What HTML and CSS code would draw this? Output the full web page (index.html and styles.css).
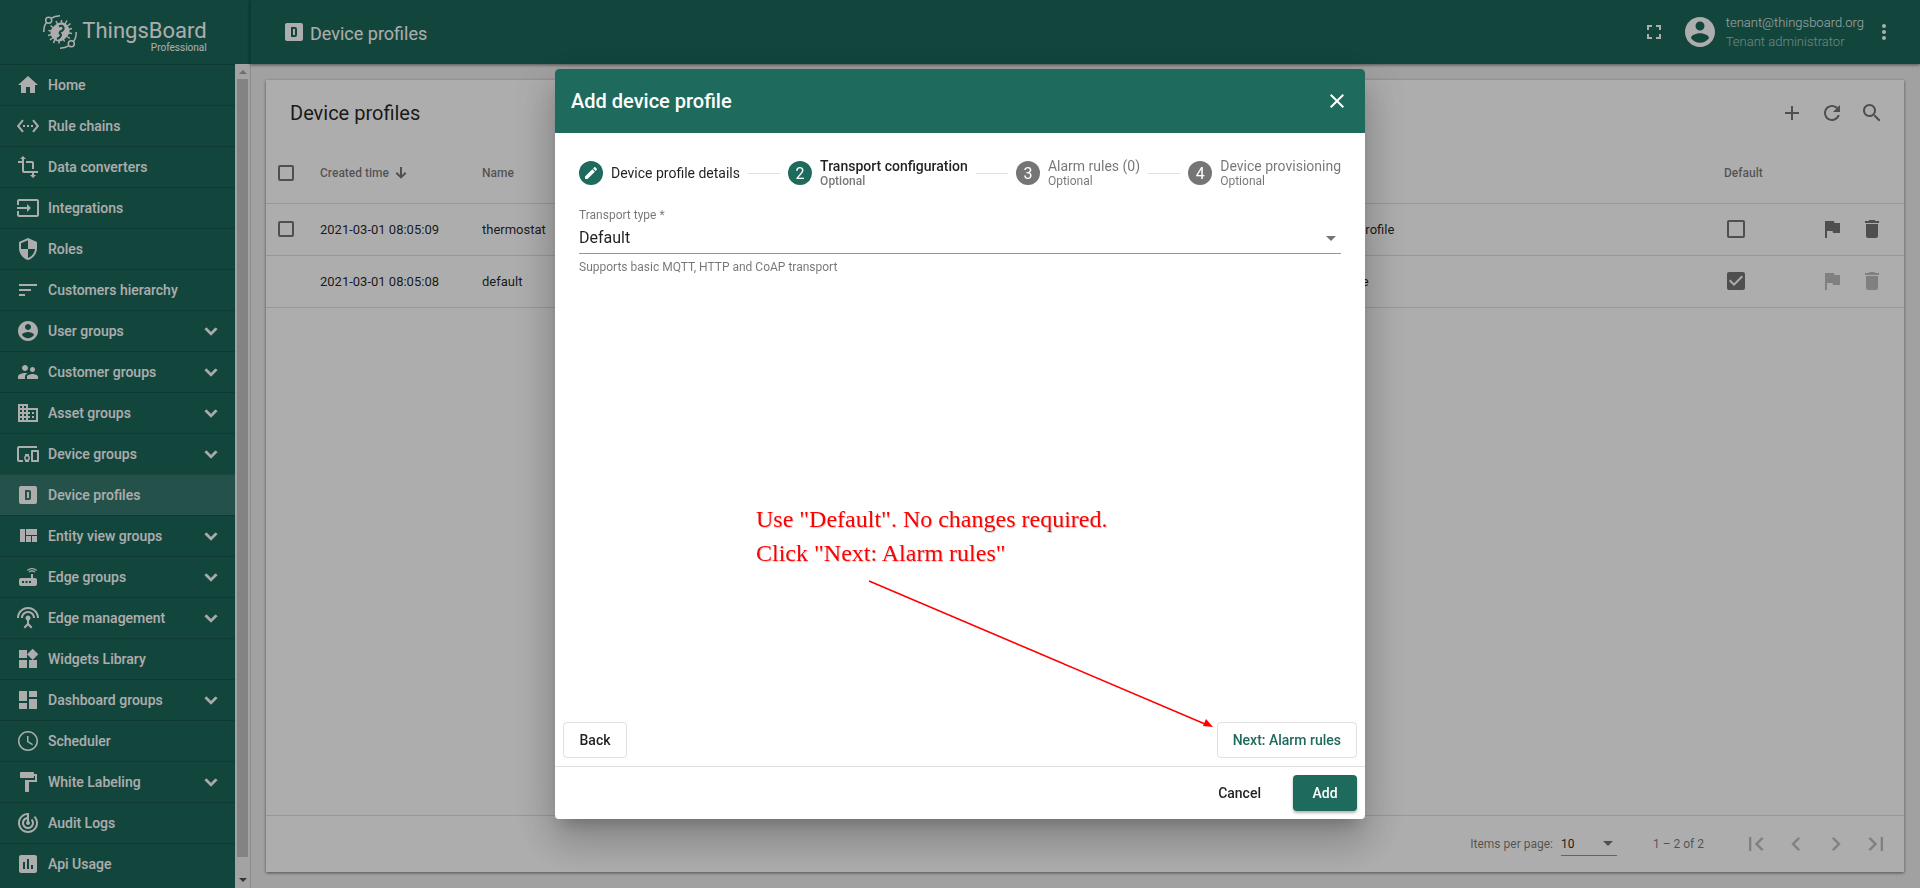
FILE: index.html
```
<!DOCTYPE html>
<html lang="en">
<head>
<meta charset="utf-8">
<title>Device profiles</title>
<link rel="stylesheet" href="styles.css">
</head>
<body>
<svg class="defs" aria-hidden="true">
  <symbol id="home" viewBox="0 0 24 24"><path d="M10 20v-6h4v6h5v-8h3L12 3 2 12h3v8z"/></symbol>
  <symbol id="chains" viewBox="0 0 24 24"><path d="M7.77 6.76L6.23 5.48.82 12l5.41 6.52 1.54-1.28L3.42 12l4.35-5.24zM7 13h2v-2H7v2zm10-2h-2v2h2v-2zm-6 2h2v-2h-2v2zm6.77-7.52l-1.54 1.28L20.58 12l-4.35 5.24 1.54 1.28L23.18 12l-5.41-6.52z"/></symbol>
  <symbol id="transform" viewBox="0 0 24 24"><path d="M22 18v-2H8V4h2L7 1 4 4h2v2H2v2h4v8c0 1.1.9 2 2 2h8v2h-2l3 3 3-3h-2v-2h4zM10 8h6v6h2V8c0-1.1-.9-2-2-2h-6v2z"/></symbol>
  <symbol id="input" viewBox="0 0 24 24"><path d="M21 3.01H3c-1.1 0-2 .9-2 2V9h2V4.99h18v14.03H3V15H1v4.01c0 1.1.9 1.98 2 1.98h18c1.1 0 2-.88 2-1.98v-14c0-1.11-.9-2-2-2zM11 16l4-4-4-4v3H1v2h10v3z"/></symbol>
  <symbol id="shield" viewBox="0 0 24 24"><path d="M12 1L3 5v6c0 5.55 3.84 10.74 9 12 5.16-1.26 9-6.45 9-12V5l-9-4zm0 10.99h7c-.53 4.12-3.28 7.79-7 8.94V12H5V6.3l7-3.11v8.8z"/></symbol>
  <symbol id="sort" viewBox="0 0 24 24"><path d="M3 18h6v-2H3v2zM3 6v2h18V6H3zm0 7h12v-2H3v2z"/></symbol>
  <symbol id="account" viewBox="0 0 24 24"><path d="M12 2C6.48 2 2 6.48 2 12s4.48 10 10 10 10-4.48 10-10S17.52 2 12 2zm0 3c1.66 0 3 1.34 3 3s-1.34 3-3 3-3-1.34-3-3 1.34-3 3-3zm0 14.2c-2.5 0-4.71-1.28-6-3.22.03-1.99 4-3.08 6-3.08 1.99 0 5.97 1.09 6 3.08-1.29 1.94-3.5 3.22-6 3.22z"/></symbol>
  <symbol id="people" viewBox="0 0 24 24"><path d="M16.5 12c1.38 0 2.49-1.12 2.49-2.5S17.88 7 16.5 7 14 8.12 14 9.5s1.12 2.5 2.5 2.5zM9 11c1.66 0 2.99-1.34 2.99-3S10.66 5 9 5 6 6.34 6 8s1.34 3 3 3zm7.5 3c-1.83 0-5.5.92-5.5 2.75V19h11v-2.25c0-1.83-3.67-2.75-5.5-2.75zM9 13c-2.33 0-7 1.17-7 3.5V19h7v-2.25c0-.85.33-2.34 2.37-3.47C10.5 13.1 9.66 13 9 13z"/></symbol>
  <symbol id="domain" viewBox="0 0 24 24"><path d="M12 7V3H2v18h20V7H12zM6 19H4v-2h2v2zm0-4H4v-2h2v2zm0-4H4V9h2v2zm0-4H4V5h2v2zm4 12H8v-2h2v2zm0-4H8v-2h2v2zm0-4H8V9h2v2zm0-4H8V5h2v2zm10 12h-8v-2h2v-2h-2v-2h2v-2h-2V9h8v10zm-2-8h-2v2h2v-2zm0 4h-2v2h2v-2z"/></symbol>
  <symbol id="devices" viewBox="0 0 24 24"><path d="M3 6h18V4H3c-1.1 0-2 .9-2 2v12c0 1.1.9 2 2 2h4v-2H3V6zm10 6H9v1.78c-.61.55-1 1.33-1 2.22s.39 1.67 1 2.22V20h4v-1.78c.61-.55 1-1.34 1-2.22s-.39-1.67-1-2.22V12zm-2 5.5c-.83 0-1.5-.67-1.5-1.5s.67-1.5 1.5-1.5 1.5.67 1.5 1.5-.67 1.5-1.5 1.5zM22 8h-6c-.5 0-1 .5-1 1v10c0 .5.5 1 1 1h6c.5 0 1-.5 1-1V9c0-.5-.5-1-1-1zm-1 10h-4v-8h4v8z"/></symbol>
  <symbol id="dbox" viewBox="0 0 24 24"><path d="M9 7h4a2 2 0 0 1 2 2v6a2 2 0 0 1-2 2H9V7m2 2v6h2V9h-2M5 3h14a2 2 0 0 1 2 2v14a2 2 0 0 1-2 2H5a2 2 0 0 1-2-2V5a2 2 0 0 1 2-2z" fill-rule="evenodd"/></symbol>
  <symbol id="quilt" viewBox="0 0 24 24"><path d="M10 18h5v-6h-5v6zm-6 0h5V5H4v13zm12 0h5v-6h-5v6zM10 5v6h11V5H10z"/></symbol>
  <symbol id="router" viewBox="0 0 24 24"><path d="M20.2 5.9l.8-.8C19.6 3.7 17.8 3 16 3s-3.600.7-5 2.100l.8.8C13 4.800 14.500 4.200 16 4.200s3 .6 4.200 1.700zm-.9.800c-.9-.9-2.100-1.400-3.300-1.400s-2.400.5-3.300 1.400l.8.8c.7-.7 1.600-1 2.500-1s1.800.3 2.500 1l.8-.8zM19 13h-2V9h-2v4H5c-1.100 0-2 .9-2 2v4c0 1.100.9 2 2 2h14c1.100 0 2-.9 2-2v-4c0-1.100-.9-2-2-2zM8 18H6v-2h2v2zm3.500 0h-2v-2h2v2zm3.500 0h-2v-2h2v2z"/></symbol>
  <symbol id="antenna" viewBox="0 0 24 24"><path d="M12 5c-3.870 0-7 3.130-7 7h2c0-2.760 2.240-5 5-5s5 2.240 5 5h2c0-3.870-3.130-7-7-7zm1 9.290c.88-.39 1.500-1.260 1.500-2.290 0-1.380-1.120-2.500-2.500-2.500S9.500 10.620 9.500 12c0 1.020.62 1.900 1.500 2.290v3.300L7.590 21 9 22.410l3-3 3 3L16.410 21 13 17.590v-3.300zM12 1C5.930 1 1 5.930 1 12h2c0-4.970 4.030-9 9-9s9 4.030 9 9h2c0-6.070-4.930-11-11-11z"/></symbol>
  <symbol id="widgets" viewBox="0 0 24 24"><path d="M13 13v8h8v-8h-8zM3 21h8v-8H3v8zM3 3v8h8V3H3zm13.660-1.310L11 7.340 16.660 13l5.660-5.660-5.660-5.650z"/></symbol>
  <symbol id="dashboard" viewBox="0 0 24 24"><path d="M3 13h8V3H3v10zm0 8h8v-6H3v6zm10 0h8V11h-8v10zm0-18v6h8V3h-8z"/></symbol>
  <symbol id="clock" viewBox="0 0 24 24"><path d="M11.990 2C6.470 2 2 6.480 2 12s4.470 10 9.990 10C17.520 22 22 17.520 22 12S17.520 2 11.990 2zM12 20.500a8.500 8.500 0 1 1 0-17 8.500 8.500 0 0 1 0 17zM12.500 7H11v6l5.250 3.150.75-1.230-4.500-2.670z"/></symbol>
  <symbol id="paint" viewBox="0 0 24 24"><path d="M18 4V3c0-.55-.45-1-1-1H5c-.55 0-1 .45-1 1v4c0 .55.45 1 1 1h12c.55 0 1-.45 1-1V6h1v4H9v11c0 .55.45 1 1 1h2c.55 0 1-.45 1-1v-9h8V4h-3z"/></symbol>
  <symbol id="track" viewBox="0 0 24 24"><path d="M19.070 4.930l-1.410 1.410C19.100 7.790 20 9.790 20 12c0 4.420-3.580 8-8 8s-8-3.580-8-8c0-4.080 3.050-7.440 7-7.930v2.020C8.160 6.570 6 9.030 6 12c0 3.310 2.690 6 6 6s6-2.690 6-6c0-1.660-.67-3.160-1.760-4.240l-1.410 1.410C15.550 9.900 16 10.900 16 12c0 2.210-1.790 4-4 4s-4-1.790-4-4c0-1.860 1.280-3.410 3-3.860v2.140c-.6.350-1 .98-1 1.720 0 1.100.9 2 2 2s2-.9 2-2c0-.74-.4-1.380-1-1.720V2h-1C6.480 2 2 6.480 2 12s4.480 10 10 10 10-4.480 10-10c0-2.760-1.120-5.260-2.930-7.070z"/></symbol>
  <symbol id="chart" viewBox="0 0 24 24"><path d="M19 3H5c-1.100 0-2 .9-2 2v14c0 1.100.9 2 2 2h14c1.100 0 2-.9 2-2V5c0-1.100-.9-2-2-2zM9 17H7v-7h2v7zm4 0h-2V7h2v10zm4 0h-2v-4h2v4z"/></symbol>
  <symbol id="chevron" viewBox="0 0 24 24"><path d="M7.410 8.840L12 13.420l4.590-4.580L18 10.250l-6 6-6-6z" stroke="currentColor" stroke-width="1"/></symbol>
  <symbol id="fullscreen" viewBox="0 0 24 24"><path d="M7 14H5v5h5v-2H7v-3zm-2-4h2V7h3V5H5v5zm12 7h-3v2h5v-5h-2v3zM14 5v2h3v3h2V5h-5z"/></symbol>
  <symbol id="more" viewBox="0 0 24 24"><path d="M12 8c1.100 0 2-.9 2-2s-.9-2-2-2-2 .9-2 2 .9 2 2 2zm0 2c-1.100 0-2 .9-2 2s.9 2 2 2 2-.9 2-2-.9-2-2-2zm0 6c-1.100 0-2 .9-2 2s.9 2 2 2 2-.9 2-2-.9-2-2-2z"/></symbol>
  <symbol id="add" viewBox="0 0 24 24"><path d="M19 13h-6v6h-2v-6H5v-2h6V5h2v6h6v2z"/></symbol>
  <symbol id="refresh" viewBox="0 0 24 24"><path d="M17.650 6.350C16.200 4.900 14.210 4 12 4c-4.420 0-7.990 3.580-7.990 8s3.570 8 7.990 8c3.730 0 6.840-2.550 7.730-6h-2.080c-.82 2.330-3.040 4-5.650 4-3.310 0-6-2.690-6-6s2.690-6 6-6c1.660 0 3.140.69 4.220 1.780L13 11h7V4l-2.350 2.350z"/></symbol>
  <symbol id="search" viewBox="0 0 24 24"><path d="M15.500 14h-.79l-.28-.27C15.410 12.590 16 11.110 16 9.500 16 5.910 13.090 3 9.500 3S3 5.910 3 9.500 5.910 16 9.500 16c1.610 0 3.090-.59 4.230-1.570l.27.28v.79l5 4.990L20.490 19l-4.990-5zm-6 0C7.010 14 5 11.990 5 9.500S7.010 5 9.500 5 14 7.010 14 9.500 11.990 14 9.500 14z"/></symbol>
  <symbol id="flag" viewBox="0 0 24 24"><path d="M14.400 6L14 4H5v17h2v-7h5.600l.4 2h7V6z"/></symbol>
  <symbol id="trash" viewBox="0 0 24 24"><path d="M6 19c0 1.100.9 2 2 2h8c1.100 0 2-.9 2-2V7H6v12zM19 4h-3.500l-1-1h-5l-1 1H5v2h14V4z"/></symbol>
  <symbol id="box" viewBox="0 0 24 24"><path d="M19 5v14H5V5h14m0-2H5c-1.100 0-2 .9-2 2v14c0 1.100.9 2 2 2h14c1.100 0 2-.9 2-2V5c0-1.100-.9-2-2-2z"/></symbol>
  <symbol id="boxon" viewBox="0 0 24 24"><path d="M19 3H5c-1.110 0-2 .9-2 2v14c0 1.100.89 2 2 2h14c1.110 0 2-.9 2-2V5c0-1.100-.89-2-2-2zm-9 14l-5-5 1.410-1.410L10 14.170l7.590-7.590L19 8l-9 9z"/></symbol>
  <symbol id="close" viewBox="0 0 24 24"><path d="M19 6.410L17.590 5 12 10.590 6.410 5 5 6.410 10.590 12 5 17.590 6.410 19 12 13.410 17.590 19 19 17.590 13.410 12z"/></symbol>
  <symbol id="pencil" viewBox="0 0 24 24"><path d="M3 17.250V21h3.750L17.810 9.940l-3.750-3.750L3 17.250zM20.710 7.040c.39-.39.39-1.020 0-1.410l-2.340-2.340c-.39-.39-1.020-.39-1.410 0l-1.830 1.830 3.750 3.750 1.830-1.830z"/></symbol>
  <symbol id="first" viewBox="0 0 24 24"><path d="M18.410 16.590L13.820 12l4.590-4.590L17 6l-6 6 6 6zM6 6h2v12H6z"/></symbol>
  <symbol id="prev" viewBox="0 0 24 24"><path d="M15.410 7.410L14 6l-6 6 6 6 1.410-1.410L10.830 12z"/></symbol>
  <symbol id="next" viewBox="0 0 24 24"><path d="M10 6L8.590 7.410 13.170 12l-4.580 4.590L10 18l6-6z"/></symbol>
  <symbol id="last" viewBox="0 0 24 24"><path d="M5.590 7.410L10.180 12l-4.590 4.590L7 18l6-6-6-6zM16 6h2v12h-2z"/></symbol>
  <symbol id="caret" viewBox="0 0 10 5"><path d="M0 0h10L5 5z"/></symbol>
  <symbol id="down" viewBox="0 0 12 12"><path d="M5 0h2v8l3-3 1.400 1.400L6 11.800.6 6.400 2 5l3 3z"/></symbol>
</svg>

<div class="app">
  <aside class="side">
    <div class="brand">
      <svg class="brand-mark" viewBox="0 0 34 34">
        <g fill="none" stroke="currentColor" stroke-width="1.500">
          <path d="M.8 17C.8 12 1.500 9.500 3.600 7.600M8.400 3.200C11 1.500 13.500 1 17 .8"/><circle cx="5.700" cy="5.300" r="3"/>
          <path d="M33.200 17c0 5-.7 7.500-2.800 9.400M25.600 30.800C23 32.500 20.500 33 17 33.200"/><circle cx="28.300" cy="28.700" r="3"/>
          <path d="M18.500 5v4M13 6l1.500 3M24 5.500L22 9M27.500 8.500l-3 2.500M29 13.500l-3.500 1M29 18.500l-3-.5M27 23.500l-3-2M21.500 26.500L20 23.500M16 28.500v-4M10.500 28l1.500-4M7 25l3-2.500M5 20.500l3.500-1M5.500 15.500l3 .5M7.500 10.500l3 2.500"/>
        </g>
        <path d="M17.500 7.500c3.500 0 4.500.5 6.500 2.500s2.500 4 2.500 7-6.500 9.500-10 9.500c-3 0-5-1-6.500-3-1.800-2-2.500-4-2.500-6.500 0-3.500 6.500-9.500 10-9.500z" fill="currentColor"/>
        <path class="brand-cut" d="M16 11.500c4-2 6 1.500 3.500 4-3 1-4 3-1.500 4 0 2-1.500 3.500-4 4.500"/>
      </svg>
      <div class="brand-text"><span class="brand-name">ThingsBoard</span><span class="brand-sub">Professional</span></div>
    </div>
    <div class="side-body">
      <nav class="menu">
        <a class="item" href="#"><svg class="icon"><use href="#home"/></svg><span>Home</span></a>
        <a class="item" href="#"><svg class="icon"><use href="#chains"/></svg><span>Rule chains</span></a>
        <a class="item" href="#"><svg class="icon"><use href="#transform"/></svg><span>Data converters</span></a>
        <a class="item" href="#"><svg class="icon"><use href="#input"/></svg><span>Integrations</span></a>
        <a class="item" href="#"><svg class="icon"><use href="#shield"/></svg><span>Roles</span></a>
        <a class="item" href="#"><svg class="icon"><use href="#sort"/></svg><span>Customers hierarchy</span></a>
        <a class="item" href="#"><svg class="icon"><use href="#account"/></svg><span>User groups</span><svg class="icon toggle"><use href="#chevron"/></svg></a>
        <a class="item" href="#"><svg class="icon"><use href="#people"/></svg><span>Customer groups</span><svg class="icon toggle"><use href="#chevron"/></svg></a>
        <a class="item" href="#"><svg class="icon"><use href="#domain"/></svg><span>Asset groups</span><svg class="icon toggle"><use href="#chevron"/></svg></a>
        <a class="item" href="#"><svg class="icon"><use href="#devices"/></svg><span>Device groups</span><svg class="icon toggle"><use href="#chevron"/></svg></a>
        <a class="item active" href="#"><svg class="icon"><use href="#dbox"/></svg><span>Device profiles</span></a>
        <a class="item" href="#"><svg class="icon"><use href="#quilt"/></svg><span>Entity view groups</span><svg class="icon toggle"><use href="#chevron"/></svg></a>
        <a class="item" href="#"><svg class="icon"><use href="#router"/></svg><span>Edge groups</span><svg class="icon toggle"><use href="#chevron"/></svg></a>
        <a class="item" href="#"><svg class="icon"><use href="#antenna"/></svg><span>Edge management</span><svg class="icon toggle"><use href="#chevron"/></svg></a>
        <a class="item" href="#"><svg class="icon"><use href="#widgets"/></svg><span>Widgets Library</span></a>
        <a class="item" href="#"><svg class="icon"><use href="#dashboard"/></svg><span>Dashboard groups</span><svg class="icon toggle"><use href="#chevron"/></svg></a>
        <a class="item" href="#"><svg class="icon"><use href="#clock"/></svg><span>Scheduler</span></a>
        <a class="item" href="#"><svg class="icon"><use href="#paint"/></svg><span>White Labeling</span><svg class="icon toggle"><use href="#chevron"/></svg></a>
        <a class="item" href="#"><svg class="icon"><use href="#track"/></svg><span>Audit Logs</span></a>
        <a class="item" href="#"><svg class="icon"><use href="#chart"/></svg><span>Api Usage</span></a>
      </nav>
      <div class="scrollbar" aria-hidden="true">
        <svg class="scroll-arrow up" viewBox="0 0 8 4"><path d="M0 4h8L4 0z"/></svg>
        <div class="thumb"></div>
        <svg class="scroll-arrow" viewBox="0 0 8 4"><path d="M0 0h8L4 4z"/></svg>
      </div>
    </div>
  </aside>

  <div class="main">
    <header class="topbar">
      <svg class="icon"><use href="#dbox"/></svg>
      <h1 class="crumb">Device profiles</h1>
      <button class="icon-btn" aria-label="Fullscreen"><svg class="icon"><use href="#fullscreen"/></svg></button>
      <svg class="avatar"><use href="#account"/></svg>
      <div class="user"><span class="email">tenant@thingsboard.org</span><span class="role">Tenant administrator</span></div>
      <button class="icon-btn" aria-label="More"><svg class="icon"><use href="#more"/></svg></button>
    </header>

    <main class="content">
      <section class="card">
        <div class="card-bar">
          <h2 class="card-title">Device profiles</h2>
          <button class="icon-btn" aria-label="Add"><svg class="icon"><use href="#add"/></svg></button>
          <button class="icon-btn" aria-label="Refresh"><svg class="icon"><use href="#refresh"/></svg></button>
          <button class="icon-btn" aria-label="Search"><svg class="icon"><use href="#search"/></svg></button>
        </div>
        <div class="table-area">
          <table class="table">
            <colgroup><col class="c-check"><col class="c-time"><col class="c-name"><col class="c-desc"><col class="c-default"><col class="c-actions"></colgroup>
            <thead>
              <tr>
                <th class="check-cell"><input class="check" type="checkbox" aria-label="Select all"></th>
                <th><span class="sorted">Created time <svg class="sort-icon"><use href="#down"/></svg></span></th>
                <th>Name</th><th></th><th>Default</th><th></th>
              </tr>
            </thead>
            <tbody>
              <tr>
                <td class="check-cell"><input class="check" type="checkbox" aria-label="Select thermostat"></td>
                <td>2021-03-01 08:05:09</td><td>thermostat</td><td>Thermostat device profile</td>
                <td><svg class="icon dim"><use href="#box"/></svg></td>
                <td><div class="actions"><button class="icon-btn" aria-label="Make default"><svg class="icon"><use href="#flag"/></svg></button><button class="icon-btn" aria-label="Delete"><svg class="icon"><use href="#trash"/></svg></button></div></td>
              </tr>
              <tr>
                <td></td>
                <td>2021-03-01 08:05:08</td><td>default</td><td>Default device profile</td>
                <td><svg class="icon dim"><use href="#boxon"/></svg></td>
                <td><div class="actions"><button class="icon-btn" aria-label="Make default" disabled><svg class="icon"><use href="#flag"/></svg></button><button class="icon-btn" aria-label="Delete" disabled><svg class="icon"><use href="#trash"/></svg></button></div></td>
              </tr>
            </tbody>
          </table>
        </div>
        <footer class="pager">
          <label for="size">Items per page:</label>
          <div class="select-wrap page-size"><select id="size"><option>10</option></select><svg class="caret"><use href="#caret"/></svg></div>
          <span class="range">1 – 2 of 2</span>
          <button class="icon-btn" aria-label="First page" disabled><svg class="icon big"><use href="#first"/></svg></button>
          <button class="icon-btn" aria-label="Previous page" disabled><svg class="icon big"><use href="#prev"/></svg></button>
          <button class="icon-btn" aria-label="Next page" disabled><svg class="icon big"><use href="#next"/></svg></button>
          <button class="icon-btn" aria-label="Last page" disabled><svg class="icon big"><use href="#last"/></svg></button>
        </footer>
      </section>
    </main>
  </div>
</div>

<div class="backdrop">
  <div class="dialog" role="dialog" aria-labelledby="dlg-title">
    <header class="dlg-head">
      <h2 class="dlg-title" id="dlg-title">Add device profile</h2>
      <button class="icon-btn" aria-label="Close"><svg class="icon"><use href="#close"/></svg></button>
    </header>
    <div class="dlg-body">
      <div class="steps">
        <div class="step done"><span class="dot"><svg class="pencil"><use href="#pencil"/></svg></span><span class="label">Device profile details</span></div>
        <span class="line"></span>
        <div class="step current"><span class="dot">2</span><span class="label">Transport configuration<small>Optional</small></span></div>
        <span class="line"></span>
        <div class="step"><span class="dot">3</span><span class="label">Alarm rules (0)<small>Optional</small></span></div>
        <span class="line"></span>
        <div class="step"><span class="dot">4</span><span class="label">Device provisioning<small>Optional</small></span></div>
      </div>
      <div class="field">
        <label for="transport">Transport type *</label>
        <div class="select-wrap"><select id="transport"><option>Default</option></select><svg class="caret"><use href="#caret"/></svg></div>
        <span class="hint">Supports basic MQTT, HTTP and CoAP transport</span>
      </div>
    </div>
    <div class="step-nav">
      <button class="btn outline">Back</button>
      <button class="btn outline primary">Next: Alarm rules</button>
    </div>
    <footer class="dlg-foot">
      <button class="btn">Cancel</button>
      <button class="btn solid">Add</button>
    </footer>
    <p class="note">Use "Default". No changes required.<br>Click "Next: Alarm rules"</p>
    <svg class="arrow" viewBox="0 0 346 150"><path d="M1 2l336 143" stroke="#f00" stroke-width="1.500"/><path d="M345 148l-10-1 3-7z" fill="#f00"/></svg>
  </div>
</div>
</body>
</html>
```
FILE: styles.css
```
* { box-sizing: border-box; }
body { margin: 0; font-family: Roboto, "Liberation Sans", sans-serif; font-size: 14px; color: rgba(0, 0, 0, .87); }
h1, h2, p { margin: 0; font-weight: 400; }
button, select { font: inherit; color: inherit; background: none; border: 0; padding: 0; }
a { color: inherit; text-decoration: none; }
svg { display: block; fill: currentColor; flex: none; }
.defs { display: none; }
.icon { width: 24px; height: 24px; }
.icon.big { width: 28px; height: 28px; }
.icon-btn { width: 40px; height: 40px; display: grid; place-items: center; flex: none; }

.app { display: flex; height: 100vh; background: #eee; }

.side { width: 250px; flex: none; display: flex; flex-direction: column; background: #1b675b; color: #fff; }
.brand { height: 64px; flex: none; display: flex; justify-content: center; align-items: center; gap: 5px; }
.brand-mark { width: 34px; height: 34px; }
.brand-cut { fill: none; stroke: #1b675b; stroke-width: 2; }
.brand-text { display: flex; flex-direction: column; align-items: flex-end; padding-top: 8px; }
.brand-name { font-size: 22px; line-height: 24px; }
.brand-sub { font-size: 10px; line-height: 10px; }
.side-body { flex: 1; min-height: 0; display: flex; }
.menu { flex: 1; overflow: hidden; }
.item { display: flex; align-items: center; gap: 8px; height: 41px; padding: 0 12px 0 16px; border-top: 1px solid rgba(0, 0, 0, .16); font-weight: 500; }
.item.active { background: rgba(255, 255, 255, .12); }
.toggle { margin-left: auto; }
.scrollbar { width: 15px; display: flex; flex-direction: column; align-items: center; gap: 5px; padding: 6px 0; background: #f1f1f1; color: #505050; }
.scroll-arrow { width: 8px; height: 4px; }
.scroll-arrow.up { color: #a3a3a3; }
.thumb { width: 11px; flex: 1; margin-bottom: 16px; background: #c1c1c1; }

.main { flex: 1; min-width: 0; display: flex; flex-direction: column; }
.topbar, .content { border-left: 1px solid rgba(0, 0, 0, .12); }
.topbar { height: 64px; flex: none; display: flex; align-items: center; padding: 0 16px 0 31px; background: #1b675b; color: #fff; box-shadow: 0 1px 3px rgba(0, 0, 0, .5); }
.crumb { flex: 1; margin-left: 4px; padding-top: 2px; font-size: 18px; }
.avatar { width: 36px; height: 36px; margin: 0 8px; }
.user { display: flex; flex-direction: column; font-size: 13px; line-height: 19px; font-weight: 300; }
.email { opacity: .9; }
.role { opacity: .6; }

.content { flex: 1; min-height: 0; padding: 16px 16px 16px 15px; }
.card { height: 100%; display: flex; flex-direction: column; background: #fff; box-shadow: 0 1px 3px rgba(0, 0, 0, .5); }
.card-bar { height: 64px; flex: none; display: flex; align-items: center; padding: 1px 12px 0 24px; color: rgba(0, 0, 0, .54); }
.card-title { flex: 1; font-size: 20px; color: rgba(0, 0, 0, .87); }
.table-area { flex: 1; min-height: 0; }
.table { width: 100%; table-layout: fixed; border-collapse: collapse; font-size: 13px; }
.c-check { width: 54px; }
.c-time { width: 162px; }
.c-name { width: 765px; }
.c-default { width: 88px; }
.c-actions { width: 92px; }
.table th, .table td { padding: 0; height: 52px; text-align: left; border-bottom: 1px solid rgba(0, 0, 0, .12); }
.table th { height: 59px; font-size: 12px; font-weight: 500; color: rgba(0, 0, 0, .54); }
.table .check-cell { padding-left: 12px; }
.check { display: block; appearance: none; width: 16px; height: 16px; margin: 0; border: 2px solid rgba(0, 0, 0, .54); border-radius: 2px; }
.sorted { display: flex; align-items: center; gap: 6px; }
.sort-icon { width: 12px; height: 12px; }
.dim, .actions { color: rgba(0, 0, 0, .54); }
.actions { display: flex; }
.icon-btn:disabled { color: rgba(0, 0, 0, .26); }

.pager { height: 57px; flex: none; display: flex; align-items: center; justify-content: flex-end; padding-right: 8px; border-top: 1px solid rgba(0, 0, 0, .12); font-size: 12px; color: rgba(0, 0, 0, .54); }
.select-wrap { display: flex; align-items: center; position: relative; border-bottom: 1px solid rgba(0, 0, 0, .42); }
.select-wrap select { appearance: none; width: 100%; color: rgba(0, 0, 0, .87); outline: 0; }
.caret { width: 10px; height: 5px; position: absolute; right: 4px; color: rgba(0, 0, 0, .54); }
.page-size { width: 56px; height: 24px; margin: 0 36px 0 8px; }
.range { margin-right: 32px; }

.backdrop { position: fixed; inset: 0; display: grid; place-items: center; background: rgba(0, 0, 0, .32); }
.dialog { position: relative; width: 810px; max-width: 80vw; height: 750px; max-height: 100vh; display: flex; flex-direction: column; background: #fff; border-radius: 4px; box-shadow: 0 11px 15px -7px rgba(0, 0, 0, .2), 0 24px 38px 3px rgba(0, 0, 0, .14), 0 9px 46px 8px rgba(0, 0, 0, .12); }
.dlg-head { height: 64px; flex: none; display: flex; align-items: center; justify-content: space-between; padding: 0 8px 0 16px; background: #1e6a5d; color: #fff; border-radius: 4px 4px 0 0; }
.dlg-title { font-size: 20px; font-weight: 500; }
.dlg-body { flex: 1; padding: 24px; }
.steps { display: flex; align-items: center; height: 32px; gap: 8px; }
.step { display: flex; align-items: center; gap: 8px; color: rgba(0, 0, 0, .54); white-space: nowrap; }
.dot { width: 24px; height: 24px; border-radius: 50%; display: grid; place-items: center; background: #757575; color: #fff; font-size: 16px; }
.done .dot, .current .dot { background: #1e6a5d; }
.pencil { width: 16px; height: 16px; }
.label { display: flex; flex-direction: column; line-height: 16px; }
.label small { font-size: 12px; line-height: 14px; color: rgba(0, 0, 0, .54); }
.done, .current { color: rgba(0, 0, 0, .87); }
.current { font-weight: 500; }
.current .dot { font-weight: 400; }
.line { flex: 1; height: 1px; background: rgba(0, 0, 0, .12); }
.field { display: flex; flex-direction: column; margin-top: 18px; font-size: 12px; line-height: 16px; color: rgba(0, 0, 0, .54); }
.field .select-wrap { height: 31px; font-size: 16px; }
.field .caret { right: 5px; }
.hint { margin-top: 5px; }
.step-nav { display: flex; justify-content: space-between; padding: 8px; border-bottom: 1px solid rgba(0, 0, 0, .12); }
.btn { height: 36px; min-width: 64px; padding: 0 16px; border-radius: 4px; font-weight: 500; }
.outline { padding: 0 15px; border: 1px solid rgba(0, 0, 0, .12); }
.primary { color: #1e6a5d; }
.dlg-foot { display: flex; justify-content: flex-end; gap: 16px; padding: 8px; }
.solid { background: #1e6a5d; color: #fff; box-shadow: 0 2px 3px rgba(0, 0, 0, .3); }
.note { position: absolute; left: 201px; top: 433px; font: 24px/34px "Liberation Serif", serif; color: #f00; text-shadow: 1px 1px 1px rgba(0, 0, 0, .2); white-space: nowrap; }
.arrow { position: absolute; left: 313px; top: 510px; width: 346px; height: 150px; }
```
